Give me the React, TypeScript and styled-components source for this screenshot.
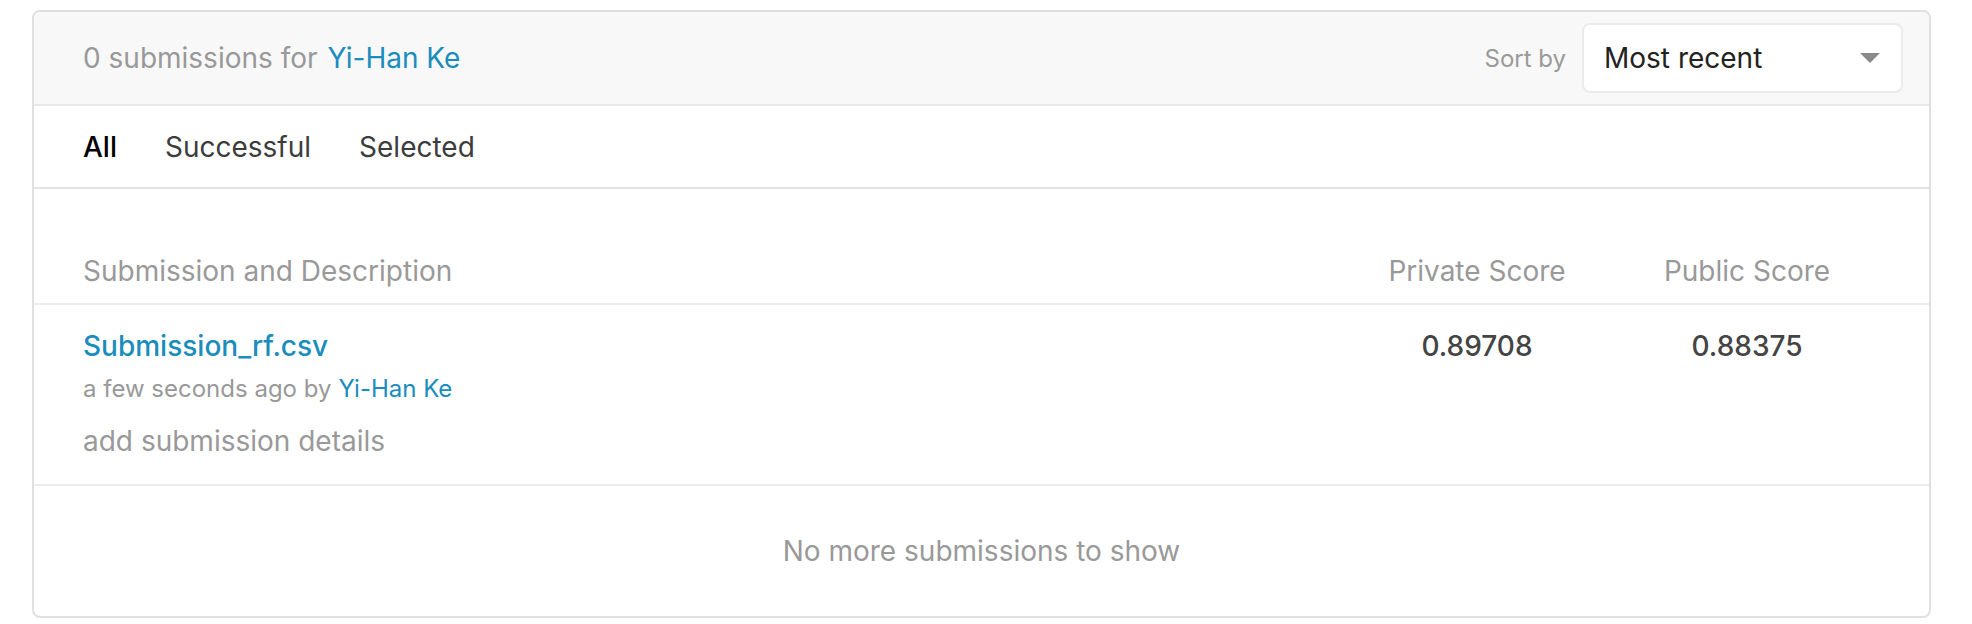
import styled, { createGlobalStyle } from 'styled-components'

const GlobalStyle = createGlobalStyle`
    body {
        margin: 0;
        background: #ffffff;
        font-family: Inter, "Noto Sans", "Liberation Sans", sans-serif;
        -webkit-font-smoothing: antialiased;
    }
`

const Card = styled.section`
    margin: 10px 41px 8px 32px;
    border: 2px solid #e0e0e0;
    border-radius: 8px;
    overflow: hidden;
    background: #ffffff;
`

const CardHeader = styled.header`
    display: flex;
    align-items: center;
    justify-content: space-between;
    height: 92px;
    padding: 0 26px 0 49px;
    background: #f8f8f8;
    border-bottom: 2px solid #e8e8e8;
`

const HeaderTitle = styled.div`
    font-size: 28px;
    color: #999999;
`

const UserLink = styled.a<{ $size?: number }>`
    margin-left: ${p => (p.$size ? 7 : 10)}px;
    color: #1a8dbd;
    font-size: ${p => p.$size ?? 28}px;
    text-decoration: none;
`

const SortWrap = styled.div`
    display: flex;
    align-items: center;
    gap: 16px;
`

const SortLabel = styled.span`
    font-size: 24px;
    color: #9a9a9a;
`

const SelectBox = styled.div`
    display: flex;
    align-items: center;
    justify-content: space-between;
    box-sizing: border-box;
    width: 321px;
    height: 70px;
    padding: 0 21px 0 20px;
    background: #ffffff;
    border: 2px solid #ebebeb;
    border-radius: 8px;
    font-size: 28px;
    color: #222222;
`

const Caret = styled.span`
    width: 0;
    height: 0;
    border-left: 10px solid transparent;
    border-right: 10px solid transparent;
    border-top: 10px solid #8a8a8a;
`

const TabBar = styled.nav`
    display: flex;
    align-items: center;
    gap: 48px;
    height: 81px;
    padding: 0 49px;
    border-bottom: 2px solid #e2e2e2;
`

const Tab = styled.span<{ $active?: boolean }>`
    font-size: 28px;
    font-weight: ${p => (p.$active ? 500 : 400)};
    color: ${p => (p.$active ? '#000000' : '#3c3c3c')};
`

const TableRow = styled.div<{ $head?: boolean }>`
    display: grid;
    grid-template-columns: 1fr 270px 270px;
    align-items: start;
    padding: ${p => (p.$head ? '64px 47px 14px 49px' : '23px 47px 25px 49px')};
    border-bottom: 2px solid #ececec;
`

const ColHead = styled.div<{ $center?: boolean }>`
    font-size: 28px;
    line-height: 36px;
    color: #999999;
    text-align: ${p => (p.$center ? 'center' : 'left')};
`

const SubmissionName = styled.a`
    display: block;
    font-size: 28px;
    line-height: 36px;
    font-weight: 500;
    color: #1a8dbd;
    text-decoration: none;
`

const Meta = styled.div`
    margin-top: 9px;
    font-size: 24px;
    line-height: 32px;
    color: #999999;
`

const Details = styled.div`
    margin-top: 18px;
    font-size: 28px;
    line-height: 36px;
    color: #999999;
`

const Score = styled.div`
    font-size: 28px;
    line-height: 36px;
    font-weight: 500;
    color: #444444;
    text-align: center;
`

const Footer = styled.div`
    display: flex;
    align-items: center;
    justify-content: center;
    height: 130px;
    font-size: 28px;
    color: #999999;
`

export default function App() {
    return (
        <>
            <GlobalStyle />
            <Card>
                <CardHeader>
                    <HeaderTitle>
                        0 submissions for<UserLink href="#">Yi-Han Ke</UserLink>
                    </HeaderTitle>
                    <SortWrap>
                        <SortLabel>Sort by</SortLabel>
                        <SelectBox>
                            Most recent
                            <Caret />
                        </SelectBox>
                    </SortWrap>
                </CardHeader>
                <TabBar>
                    <Tab $active>All</Tab>
                    <Tab>Successful</Tab>
                    <Tab>Selected</Tab>
                </TabBar>
                <TableRow $head>
                    <ColHead>Submission and Description</ColHead>
                    <ColHead $center>Private Score</ColHead>
                    <ColHead $center>Public Score</ColHead>
                </TableRow>
                <TableRow>
                    <div>
                        <SubmissionName href="#">Submission_rf.csv</SubmissionName>
                        <Meta>
                            a few seconds ago by<UserLink href="#" $size={24}>Yi-Han Ke</UserLink>
                        </Meta>
                        <Details>add submission details</Details>
                    </div>
                    <Score>0.89708</Score>
                    <Score>0.88375</Score>
                </TableRow>
                <Footer>No more submissions to show</Footer>
            </Card>
        </>
    )
}
